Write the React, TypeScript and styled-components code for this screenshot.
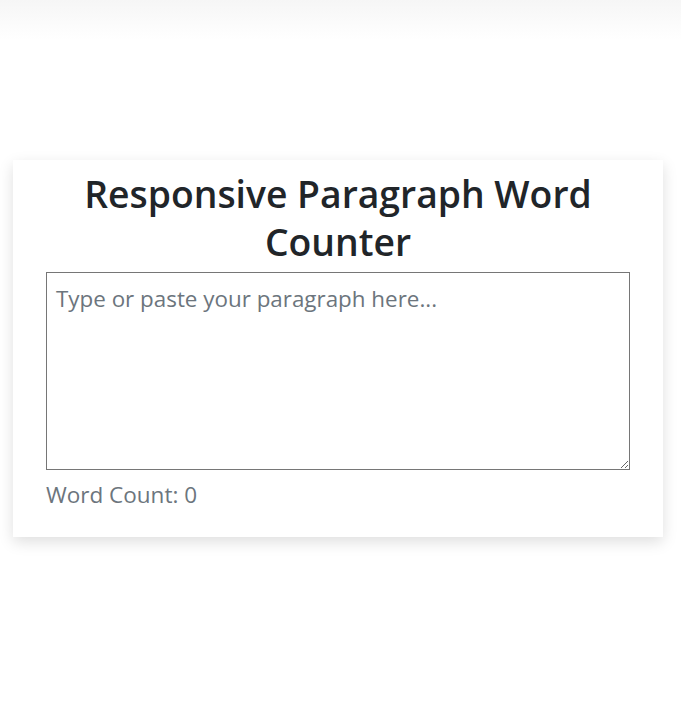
import React, { useState } from "react";
import styled, { createGlobalStyle } from "styled-components";

const GlobalStyle = createGlobalStyle`
  html, body {
    margin: 0;
    padding: 0;
  }
  body {
    min-height: 715px;
    background: linear-gradient(to bottom, #f6f6f6 0px, #ffffff 40px) no-repeat, #ffffff;
    font-family: "Open Sans", "Noto Sans", sans-serif;
    color: #212529;
  }
`;

const Page = styled.div`
  display: flex;
  padding: 160px 0 0 13px;
`;

const Card = styled.div`
  width: 650px;
  box-sizing: border-box;
  background: #ffffff;
  padding: 10px 33px 26px 33px;
  box-shadow: 0 5px 14px rgba(0, 0, 0, 0.13);
  display: flex;
  flex-direction: column;
`;

const Title = styled.h1`
  margin: 0 0 6px 0;
  font-size: 37.3px;
  line-height: 48px;
  font-weight: 600;
  text-align: center;
  color: #212529;
`;

const TextBox = styled.textarea`
  width: 584px;
  height: 198px;
  box-sizing: border-box;
  border: 1px solid #767676;
  border-radius: 0;
  padding: 11px 9px 8px 9px;
  margin: 0;
  font-family: "Open Sans", "Noto Sans", sans-serif;
  font-size: 22.4px;
  line-height: 1.35;
  color: #212529;
  resize: vertical;
  outline: none;
  &::placeholder {
    color: #6c757d;
    opacity: 1;
  }
`;

const Count = styled.p`
  margin: 9px 0 0 0;
  font-size: 22.5px;
  line-height: 32px;
  color: #6c757d;
`;

export default function App() {
  const [text, setText] = useState("");
  const words = text.trim() === "" ? 0 : text.trim().split(/\s+/).length;
  return (
    <>
      <GlobalStyle />
      <Page>
        <Card>
          <Title>Responsive Paragraph Word Counter</Title>
          <TextBox
            placeholder="Type or paste your paragraph here..."
            value={text}
            onChange={(e) => setText(e.target.value)}
          />
          <Count>Word Count: {words}</Count>
        </Card>
      </Page>
    </>
  );
}
